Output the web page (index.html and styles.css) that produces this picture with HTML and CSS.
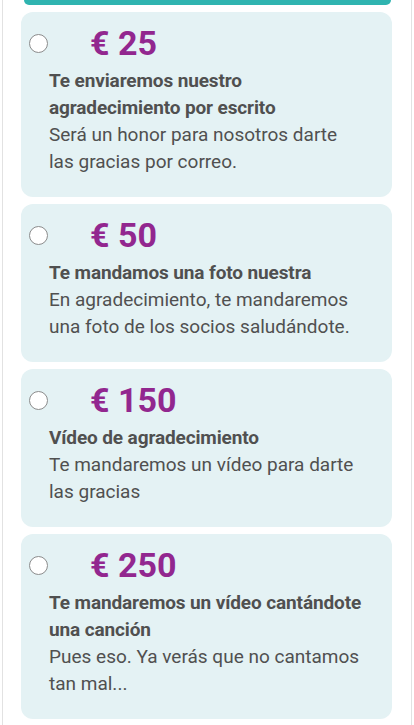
FILE: index.html
```html
<!DOCTYPE html>
<html lang="es">
<head>
<meta charset="utf-8">
<link rel="stylesheet" href="styles.css">
</head>
<body>
<div class="page">
  <div class="top-bar"></div>
  <div class="card">
    <div class="price-row"><span class="radio"></span><span class="price">€ 25</span></div>
    <div class="text">
      <div class="title">Te enviaremos nuestro agradecimiento por escrito</div>
      <div class="desc">Será un honor para nosotros darte las gracias por correo.</div>
    </div>
  </div>
  <div class="card">
    <div class="price-row"><span class="radio"></span><span class="price">€ 50</span></div>
    <div class="text">
      <div class="title">Te mandamos una foto nuestra</div>
      <div class="desc">En agradecimiento, te mandaremos una foto de los socios saludándote.</div>
    </div>
  </div>
  <div class="card">
    <div class="price-row"><span class="radio"></span><span class="price">€ 150</span></div>
    <div class="text">
      <div class="title">Vídeo de agradecimiento</div>
      <div class="desc">Te mandaremos un vídeo para darte las gracias</div>
    </div>
  </div>
  <div class="card">
    <div class="price-row"><span class="radio"></span><span class="price">€ 250</span></div>
    <div class="text">
      <div class="title">Te mandaremos un vídeo cantándote una canción</div>
      <div class="desc">Pues eso. Ya verás que no cantamos tan mal...</div>
    </div>
  </div>
</div>
</body>
</html>
```
FILE: styles.css
```css
html, body {
  margin: 0;
  padding: 0;
  background: #ffffff;
}
body {
  font-family: Roboto, "Noto Sans", sans-serif;
}
.page {
  margin: 0 2px;
  border-left: 1px solid #e2e2e2;
  border-right: 1px solid #e2e2e2;
  min-height: 725px;
  padding: 0 19px 0 18px;
  display: flex;
  flex-direction: column;
  gap: 7px;
  box-sizing: border-box;
}
.top-bar {
  height: 5px;
  margin: 0 1px 0 3px;
  background: #2fb4b0;
  border-radius: 0 0 9px 9px;
}
.card {
  background: #e4f2f4;
  border-radius: 12px;
  padding: 11px 27px 22px 8px;
}
.price-row {
  display: flex;
  align-items: center;
  height: 40px;
}
.radio {
  width: 17px;
  height: 17px;
  border: 1px solid #8c8c8c;
  border-radius: 50%;
  background: #ffffff;
  flex: none;
}
.price {
  margin-left: 42px;
  font-size: 34px;
  line-height: 40px;
  font-weight: 700;
  color: #92278f;
}
.text {
  margin-top: 4px;
  padding-left: 20px;
  font-size: 19px;
  line-height: 27px;
  color: #505050;
}
.title {
  font-weight: 700;
  letter-spacing: -0.12px;
}
.desc {
  font-weight: 400;
}
```
